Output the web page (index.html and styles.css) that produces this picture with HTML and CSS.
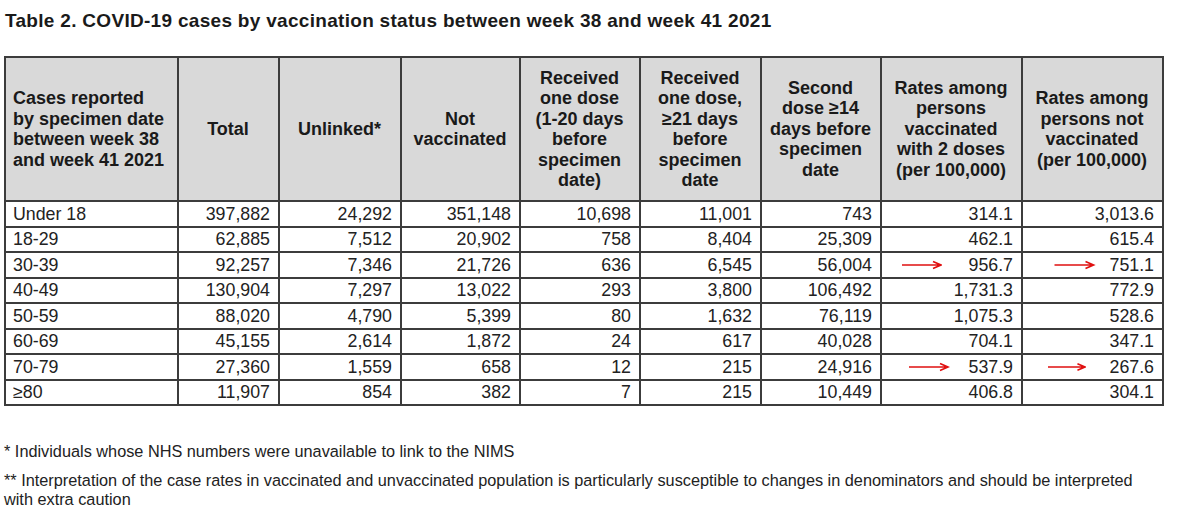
FILE: index.html
```html
<!DOCTYPE html>
<html lang="en">
<head>
<meta charset="utf-8">
<title>Table 2. COVID-19 cases by vaccination status</title>
<link rel="stylesheet" href="styles.css">
</head>
<body>
<main class="page">
  <h1 class="title">Table 2. COVID-19 cases by vaccination status between week 38 and week 41 2021</h1>
  <table class="data">
    <colgroup>
      <col class="c1"><col class="c2"><col class="c3"><col class="c4"><col class="c5"><col class="c6"><col class="c7"><col class="c8"><col class="c9">
    </colgroup>
    <thead>
      <tr>
        <th class="first">Cases reported<br>by specimen date<br>between week 38<br>and week 41 2021</th>
        <th>Total</th>
        <th>Unlinked*</th>
        <th>Not<br>vaccinated</th>
        <th>Received<br>one dose<br>(1-20 days<br>before<br>specimen<br>date)</th>
        <th>Received<br>one dose,<br>≥21 days<br>before<br>specimen<br>date</th>
        <th>Second<br>dose ≥14<br>days before<br>specimen<br>date</th>
        <th>Rates among<br>persons<br>vaccinated<br>with 2 doses<br>(per 100,000)</th>
        <th>Rates among<br>persons not<br>vaccinated<br>(per 100,000)</th>
      </tr>
    </thead>
    <tbody>
      <tr><td class="first">Under 18</td><td>397,882</td><td>24,292</td><td>351,148</td><td>10,698</td><td>11,001</td><td>743</td><td>314.1</td><td>3,013.6</td></tr>
      <tr><td class="first">18-29</td><td>62,885</td><td>7,512</td><td>20,902</td><td>758</td><td>8,404</td><td>25,309</td><td>462.1</td><td>615.4</td></tr>
      <tr><td class="first">30-39</td><td>92,257</td><td>7,346</td><td>21,726</td><td>636</td><td>6,545</td><td>56,004</td>
        <td class="marked"><svg class="arrow a1" viewBox="0 0 40 10" aria-hidden="true"><path d="M0 5H39M31 1.5L39 5L31 8.5"/></svg>956.7</td>
        <td class="marked"><svg class="arrow a2" viewBox="0 0 40 10" aria-hidden="true"><path d="M0 5H39M31 1.5L39 5L31 8.5"/></svg>751.1</td></tr>
      <tr><td class="first">40-49</td><td>130,904</td><td>7,297</td><td>13,022</td><td>293</td><td>3,800</td><td>106,492</td><td>1,731.3</td><td>772.9</td></tr>
      <tr><td class="first">50-59</td><td>88,020</td><td>4,790</td><td>5,399</td><td>80</td><td>1,632</td><td>76,119</td><td>1,075.3</td><td>528.6</td></tr>
      <tr><td class="first">60-69</td><td>45,155</td><td>2,614</td><td>1,872</td><td>24</td><td>617</td><td>40,028</td><td>704.1</td><td>347.1</td></tr>
      <tr><td class="first">70-79</td><td>27,360</td><td>1,559</td><td>658</td><td>12</td><td>215</td><td>24,916</td>
        <td class="marked"><svg class="arrow a3" viewBox="0 0 40 10" aria-hidden="true"><path d="M0 5H39M31 1.5L39 5L31 8.5"/></svg>537.9</td>
        <td class="marked"><svg class="arrow a4" viewBox="0 0 40 10" aria-hidden="true"><path d="M0 5H39M31 1.5L39 5L31 8.5"/></svg>267.6</td></tr>
      <tr><td class="first">≥80</td><td>11,907</td><td>854</td><td>382</td><td>7</td><td>215</td><td>10,449</td><td>406.8</td><td>304.1</td></tr>
    </tbody>
  </table>
  <div class="notes">
    <p>* Individuals whose NHS numbers were unavailable to link to the NIMS</p>
    <p>** Interpretation of the case rates in vaccinated and unvaccinated population is particularly susceptible to changes in denominators and should be interpreted<br>with extra caution</p>
  </div>
</main>
</body>
</html>
```
FILE: styles.css
```css
html, body {
  margin: 0;
  padding: 0;
  background: #ffffff;
}
body {
  font-family: "Liberation Sans", Arial, sans-serif;
  color: #1e1e1e;
}
.page {
  padding: 0 0 0 4px;
}
.title {
  margin: 10px 0 0 1px;
  font-size: 19px;
  line-height: 22px;
  letter-spacing: 0.3px;
  font-weight: bold;
  color: #1a1a1a;
}
.data {
  margin-top: 24px;
  width: 1158px;
  table-layout: fixed;
  border-collapse: collapse;
  border: 2px solid #555;
}
.c1 { width: 173px; }
.c2 { width: 101px; }
.c3 { width: 122px; }
.c4 { width: 119px; }
.c5 { width: 120px; }
.c6 { width: 121px; }
.c7 { width: 120px; }
.c8 { width: 141px; }
.c9 { width: 141px; }
.data th,
.data td {
  border: 2px solid #3c3c3c;
  padding: 0 8px 0 7px;
}
.data th {
  background: #d9d9d9;
  height: 142px;
  font-size: 18px;
  line-height: 20.5px;
  font-weight: bold;
  text-align: center;
  vertical-align: middle;
  color: #1a1a1a;
}
.data th.first {
  text-align: left;
}
.data td {
  height: 23.5px;
  font-size: 17.8px;
  line-height: 20px;
  text-align: right;
  white-space: nowrap;
  color: #222;
}
.data td.first {
  text-align: left;
}
.marked {
  position: relative;
}
.arrow {
  position: absolute;
  top: 50%;
  height: 10px;
  margin-top: -5px;
  fill: none;
  stroke: #e01010;
  stroke-width: 1.7;
}
.a1 { left: 20px; width: 40px; }
.a2 { left: 30px; width: 43px; }
.a3 { left: 26px; width: 42px; }
.a4 { left: 25px; width: 38px; }
.notes {
  margin-top: 36px;
  font-size: 16.3px;
  line-height: 19px;
  color: #222;
}
.notes p {
  margin: 0 0 10px 0;
}
```
